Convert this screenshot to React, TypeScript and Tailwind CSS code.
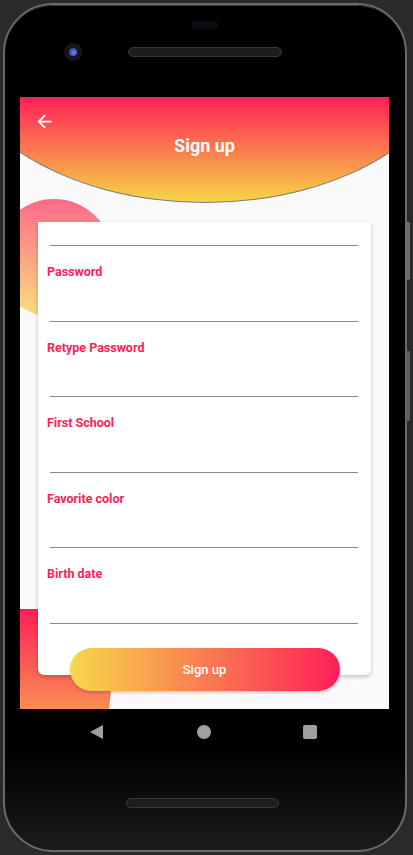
import React from "react";
import { MdArrowBack } from "react-icons/md";

const fields = ["Password", "Retype Password", "First School", "Favorite color", "Birth date"];

export default function App() {
  return (
    <div className="relative w-[413px] h-[855px] bg-[#2a2a2a] pt-[3px] pl-[3px] font-['Roboto',sans-serif] overflow-hidden">
      {/* side buttons */}
      <div className="absolute left-[406px] top-[222px] w-[4px] h-[58px] rounded-r-[2px] bg-[#6e6e6e]" />
      <div className="absolute left-[406px] top-[351px] w-[4px] h-[70px] rounded-r-[2px] bg-[#5e5e5e]" />
      <div className="w-[404px] h-[849px] rounded-[50px] border-[2px] border-[#6a6a6a] bg-[linear-gradient(180deg,#000_88%,#1b1b1b)] overflow-hidden">
        <div className="h-full rounded-[48px] border-t border-[#3a3a3a]">
          {/* top hardware */}
          <div className="h-[91px]">
            <div className="pt-[15px] flex justify-center">
              <div className="w-[26px] h-[8px] rounded-full bg-[#0b0d12]" />
            </div>
            <div className="mt-[14px] pl-[59px] flex items-center">
              <div className="w-[18px] h-[18px] rounded-full bg-[#15161c] flex items-center justify-center">
                <div className="w-[8px] h-[8px] rounded-full bg-[radial-gradient(circle_at_60%_60%,#6a86ff,#1c2a66)]" />
              </div>
              <div className="ml-[46px] w-[154px] h-[10px] rounded-full bg-[#1d1d1b] border border-[#3a3a36]" />
            </div>
          </div>

          {/* screen */}
          <div className="ml-[15px] relative w-[369px] h-[612px] bg-[#fafafa] overflow-hidden">
            <div className="absolute left-[-75px] top-[-63px] w-[520px] h-[169px] rounded-bl-[260px_169px] rounded-br-[260px_169px] border border-[#7a7a7a] bg-[linear-gradient(180deg,#ff1f57_37%,#f6d646_100%)]" />
            <div className="absolute left-[-25px] top-[102px] w-[118px] h-[118px] rounded-full bg-[linear-gradient(180deg,#ff6a88,#f9df80)]" />
            <div className="absolute left-0 top-[512px] w-[100px] h-[100px] bg-[linear-gradient(180deg,#ff1f57,#f98d55)] [clip-path:polygon(0_0,100%_0,89%_100%,0_100%)]" />

            <div className="relative">
              <div className="h-[36px] pt-[14px] pl-[14px]">
                <MdArrowBack size={21} color="#ffffff" />
              </div>
              <div className="mt-[1px] h-[24px] leading-[24px] text-center text-white text-[18px] font-bold">
                Sign up
              </div>
              <div className="mt-[64px] ml-[18px] w-[333px] h-[453px] bg-white rounded-b-[6px] shadow-[0_2px_4px_rgba(0,0,0,0.22)] pt-[23px]">
                <div className="ml-[12px] w-[308px] h-px bg-[#8a8a8a]" />
                {fields.map((f) => (
                  <div key={f}>
                    <div className="mt-[19px] ml-[9px] h-[14px] leading-[14px] text-[12.5px] font-bold text-[#ff2157]">
                      {f}
                    </div>
                    <div className="mt-[41.5px] ml-[12px] w-[308px] h-px bg-[#8a8a8a]" />
                  </div>
                ))}
              </div>
              <div className="relative -mt-[27px] mx-auto w-[270px] h-[43px] rounded-full bg-[linear-gradient(90deg,#f6d84a,#ff1f57)] shadow-[0_2px_3px_rgba(0,0,0,0.18)] flex items-center justify-center text-white text-[13px] font-medium">
                Sign up
              </div>
            </div>
          </div>

          {/* nav bar */}
          <div className="h-[45px] pt-[1px] flex items-center pl-[85px]">
            <svg width="13" height="14" viewBox="0 0 13 14">
              <polygon points="0,7 13,0 13,14" fill="#a0a0a0" />
            </svg>
            <div className="ml-[94px] w-[14px] h-[14px] rounded-full bg-[#a0a0a0]" />
            <div className="ml-[92px] w-[14px] h-[14px] rounded-[2px] bg-[#a0a0a0]" />
          </div>

          {/* bottom speaker */}
          <div className="mt-[44px] ml-[121px] w-[153px] h-[10px] rounded-full bg-[#1d1d1b] border border-[#3a3a36]" />
        </div>
      </div>
    </div>
  );
}
